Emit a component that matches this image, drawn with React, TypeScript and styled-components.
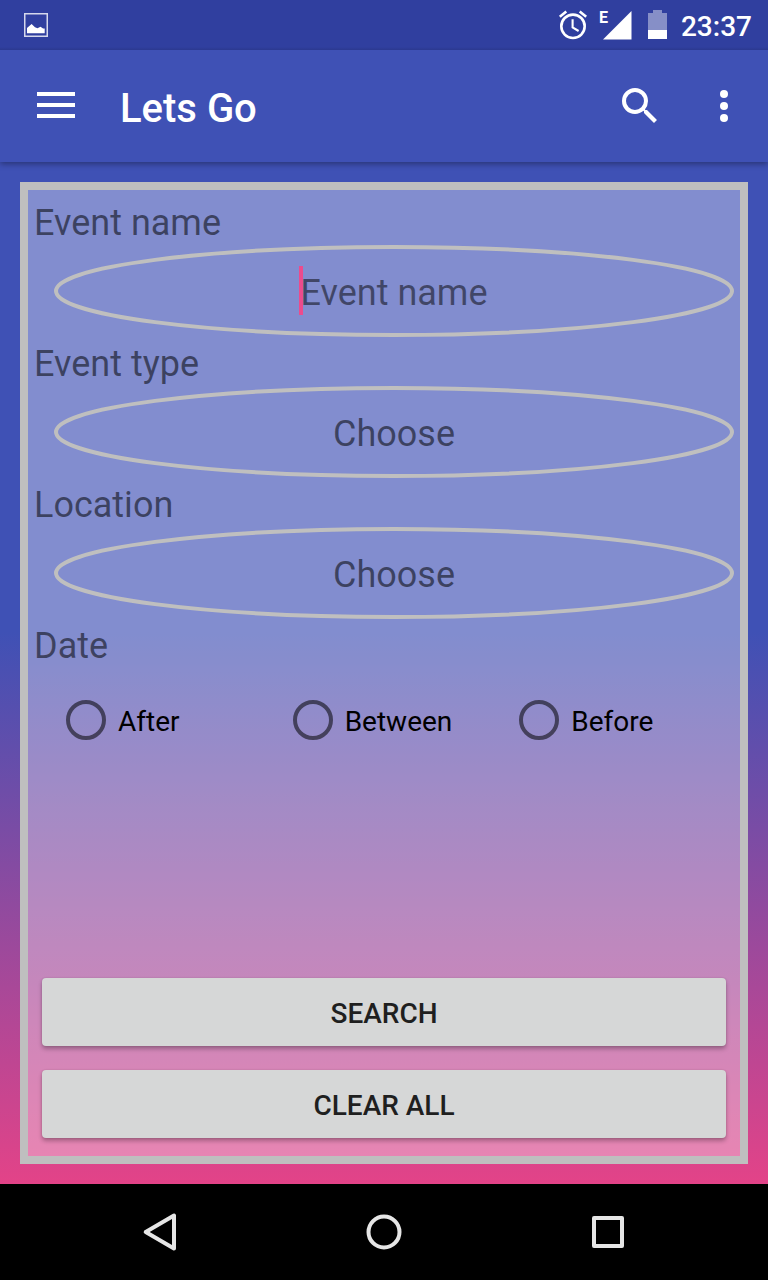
import React from "react";
import styled, { createGlobalStyle } from "styled-components";

const GlobalStyle = createGlobalStyle`
  *, *::before, *::after { box-sizing: border-box; }
  body {
    margin: 0;
    font-family: Roboto, "Liberation Sans", sans-serif;
    background: #000;
  }
  button, input, select { font-family: inherit; margin: 0; }
`;

const Screen = styled.div`
  min-height: 100vh;
  display: flex;
  flex-direction: column;
`;

const StatusBar = styled.div`
  position: relative;
  z-index: 1;
  height: 50px;
  padding: 0 16px 0 24px;
  display: flex;
  align-items: center;
  justify-content: space-between;
  background: linear-gradient(#303f9f 47px, #2b3990 50px);
  color: #fff;
`;

const StatusGroup = styled.div`
  display: flex;
  align-items: center;
  gap: 10px;

  svg { display: block; }
`;

const Clock = styled.time`
  font-size: 28px;
  line-height: 34px;
  font-weight: 500;
  padding: 4px 0 0 3px;
`;

const AppBar = styled.header`
  position: relative;
  height: 112px;
  padding: 0 20px 0 32px;
  display: flex;
  align-items: center;
  background: #3f51b5;
  box-shadow: 0 2px 6px rgba(0, 0, 0, 0.36);
  color: #fff;
`;

const Title = styled.h1`
  flex: 1;
  margin: 0;
  padding: 6px 0 0 40px;
  font-size: 40px;
  line-height: 48px;
  font-weight: 500;
`;

const Actions = styled.div`
  display: flex;
  gap: 36px;
`;

const IconButton = styled.button`
  width: 48px;
  height: 48px;
  padding: 0;
  border: 0;
  background: none;
  color: inherit;
  cursor: pointer;

  svg { display: block; }
`;

const Content = styled.main`
  flex: 1;
  padding: 20px;
  display: flex;
  background: linear-gradient(#3f51b5 0%, #3f51b5 46%, #e34388 100%);
`;

const Panel = styled.form`
  flex: 1;
  min-width: 0;
  padding: 6px;
  display: flex;
  flex-direction: column;
  border: 8px solid #bfbfbf;
  background: rgba(255, 255, 255, 0.35);
  background-clip: padding-box;
`;

const labelText = `
  display: block;
  padding: 6px 0 1px;
  font-size: 36px;
  line-height: 42px;
  color: rgba(0, 0, 0, 0.54);
`;

const Label = styled.label`${labelText}`;
const Legend = styled.legend`${labelText}`;

const Field = styled.div`
  position: relative;
  margin-left: 20px;
`;

const Outline = styled.svg`
  position: absolute;
  inset: 0;
  width: 100%;
  height: 100%;
  pointer-events: none;

  ellipse {
    rx: calc(50% - 2px);
    ry: 44px;
    fill: none;
    stroke: #bfbfbf;
    stroke-width: 4px;
  }
`;

const control = `
  display: block;
  width: 100%;
  height: 92px;
  padding: 4px 0 0;
  border: 0;
  border-radius: 50%;
  outline: 0;
  background: transparent;
  font-size: 36px;
  line-height: 42px;
  text-align: center;
  color: rgba(0, 0, 0, 0.54);
`;

const TextInput = styled.input`
  ${control}
  caret-color: #ff4081;
  &::placeholder { color: rgba(0, 0, 0, 0.5); opacity: 1; }
`;

const Select = styled.select`
  ${control}
  appearance: none;
  text-align-last: center;
`;

const Caret = styled.span`
  position: absolute;
  top: 21px;
  left: calc(50% - 95px);
  width: 4px;
  height: 49px;
  background: rgba(255, 64, 129, 0.85);
`;

const DateGroup = styled.fieldset`
  min-width: 0;
  margin: 0;
  padding: 0;
  border: 0;
`;

const RadioRow = styled.div`
  margin: 20px 0 0 20px;
  display: grid;
  grid-template-columns: repeat(3, 1fr);
`;

const RadioLabel = styled.label`
  height: 64px;
  padding-left: 12px;
  display: flex;
  align-items: center;
  gap: 12px;
  font-size: 28px;
  line-height: 32px;
  color: #000;

  span { padding-top: 4px; }
`;

const Radio = styled.input`
  appearance: none;
  flex: none;
  width: 40px;
  height: 40px;
  border: 4px solid rgba(0, 0, 0, 0.54);
  border-radius: 50%;

  &:checked { background: radial-gradient(#ff4081 9px, transparent 10px); }
`;

const ButtonStack = styled.div`
  margin-top: auto;
  padding: 12px 8px;
  display: flex;
  flex-direction: column;
  gap: 24px;
`;

const RaisedButton = styled.button`
  height: 68px;
  padding: 4px 0 0;
  border: 0;
  border-radius: 4px;
  background: #d6d7d7;
  box-shadow: 0 3px 4px rgba(0, 0, 0, 0.28), 0 0 2px rgba(0, 0, 0, 0.14);
  color: #1f1f1f;
  font-size: 28px;
  line-height: 32px;
  font-weight: 500;
  text-transform: uppercase;
`;

const NavBar = styled.nav`
  height: 96px;
  padding: 0 48px;
  display: grid;
  grid-template-columns: repeat(3, 1fr);
  place-items: center;
  background: #000;
  color: #e6e6e6;
`;

const PictureIcon = () => (
  <svg width="24" height="24" viewBox="0 0 24 24" aria-hidden="true">
    <rect x="0.75" y="0.75" width="22.5" height="22.5" fill="none" stroke="#d5d8ec" strokeWidth="1.5" />
    <path d="M3 20.3V15l4.6-4 3.4 3.3 2.5 1 3-1.6 2.6 1.9h1.6v4.7z" fill="#fff" />
  </svg>
);

const AlarmIcon = () => (
  <svg width="30" height="30" viewBox="0 0 30 30" fill="none" stroke="#fff" aria-hidden="true">
    <circle cx="15" cy="16.3" r="11.7" strokeWidth="2.6" />
    <path d="M14.6 9.3v8.2l6 3.5" strokeWidth="2.1" />
    <path d="M1.8 6.8 8.3 1.6M21.7 1.6l6.5 5.2" strokeWidth="2.6" />
  </svg>
);

const SignalIcon = () => (
  <svg width="34" height="40" viewBox="0 -5 34 40" fill="#fff" aria-hidden="true">
    <path d="M5 29.5 33.5 1v28.5z" />
    <text x="1" y="13" fontSize="16" fontWeight="700">E</text>
  </svg>
);

const BatteryIcon = () => (
  <svg width="26" height="30" viewBox="0 0 26 30" fill="#fff" aria-hidden="true">
    <path d="M6 3h5V0h9v3h5v17H6z" opacity="0.42" />
    <path d="M6 20h19v9H6z" />
  </svg>
);

const MenuIcon = () => (
  <svg width="48" height="48" viewBox="0 0 48 48" fill="currentColor" aria-hidden="true">
    <path d="M5 10h38v4H5zM5 21h38v4H5zM5 32h38v4H5z" />
  </svg>
);

const SearchIcon = () => (
  <svg width="48" height="48" viewBox="0 0 24 24" fill="currentColor" aria-hidden="true">
    <path d="M15.5 14h-.79l-.28-.27A6.47 6.47 0 0 0 16 9.5 6.5 6.5 0 1 0 9.5 16c1.61 0 3.09-.59 4.23-1.57l.27.28v.79l5 4.99L20.49 19l-4.99-5zm-6 0a4.5 4.5 0 1 1 0-9 4.5 4.5 0 0 1 0 9z" />
  </svg>
);

const MoreIcon = () => (
  <svg width="48" height="48" viewBox="0 0 48 48" fill="currentColor" aria-hidden="true">
    <circle cx="24" cy="12" r="4" />
    <circle cx="24" cy="24" r="4" />
    <circle cx="24" cy="36" r="4" />
  </svg>
);

const NavIcon = ({ children }: { children: React.ReactNode }) => (
  <svg width="48" height="48" viewBox="0 0 48 48" fill="none" stroke="currentColor" strokeWidth="4" strokeLinejoin="round" aria-hidden="true">
    {children}
  </svg>
);

const FieldOutline = () => (
  <Outline aria-hidden="true">
    <ellipse cx="50%" cy="50%" />
  </Outline>
);

const dateModes = ["After", "Between", "Before"];

export default function App() {
  return (
    <Screen>
      <GlobalStyle />
      <StatusBar>
        <PictureIcon />
        <StatusGroup>
          <AlarmIcon />
          <SignalIcon />
          <BatteryIcon />
          <Clock>23:37</Clock>
        </StatusGroup>
      </StatusBar>

      <AppBar>
        <IconButton type="button" aria-label="Menu"><MenuIcon /></IconButton>
        <Title>Lets Go</Title>
        <Actions>
          <IconButton type="button" aria-label="Search"><SearchIcon /></IconButton>
          <IconButton type="button" aria-label="More options"><MoreIcon /></IconButton>
        </Actions>
      </AppBar>

      <Content>
        <Panel onSubmit={(e) => e.preventDefault()}>
          <Label htmlFor="event-name">Event name</Label>
          <Field>
            <FieldOutline />
            <TextInput id="event-name" type="text" placeholder="Event name" />
            <Caret />
          </Field>

          <Label htmlFor="event-type">Event type</Label>
          <Field>
            <FieldOutline />
            <Select id="event-type"><option>Choose</option></Select>
          </Field>

          <Label htmlFor="location">Location</Label>
          <Field>
            <FieldOutline />
            <Select id="location"><option>Choose</option></Select>
          </Field>

          <DateGroup>
            <Legend>Date</Legend>
            <RadioRow>
              {dateModes.map((mode) => (
                <RadioLabel key={mode}>
                  <Radio type="radio" name="date" value={mode} />
                  <span>{mode}</span>
                </RadioLabel>
              ))}
            </RadioRow>
          </DateGroup>

          <ButtonStack>
            <RaisedButton type="submit">Search</RaisedButton>
            <RaisedButton type="reset">Clear all</RaisedButton>
          </ButtonStack>
        </Panel>
      </Content>

      <NavBar>
        <IconButton type="button" aria-label="Back">
          <NavIcon><path d="M38 7.6v32.8L9.7 24z" /></NavIcon>
        </IconButton>
        <IconButton type="button" aria-label="Home">
          <NavIcon><circle cx="24" cy="24" r="15.5" /></NavIcon>
        </IconButton>
        <IconButton type="button" aria-label="Recent apps">
          <NavIcon><rect x="10" y="10" width="28" height="28" /></NavIcon>
        </IconButton>
      </NavBar>
    </Screen>
  );
}
